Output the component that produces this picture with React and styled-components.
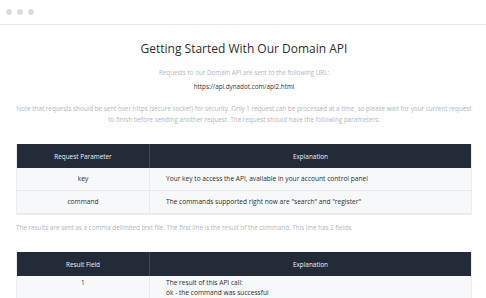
import styled, { createGlobalStyle } from "styled-components";

const GlobalStyle = createGlobalStyle`
  body {
    margin: 0;
    background: #ffffff;
    font-family: "Open Sans", "Liberation Sans", sans-serif;
  }
`;

const Window = styled.div`
  width: 486px;
  height: 298px;
  overflow: hidden;
  background: #fff;
`;

const TopBar = styled.div`
  height: 25px;
  display: flex;
  align-items: center;
  gap: 5px;
  padding-left: 6px;
  border-bottom: 1px solid #e6e6e6;
  box-sizing: border-box;
`;

const Dot = styled.span`
  width: 6px;
  height: 6px;
  border-radius: 50%;
  background: #dcdcdc;
`;

const Content = styled.div`
  padding: 0 14px 0 16px;
  text-align: center;
`;

const Title = styled.h1`
  margin: 16px 0 0;
  font-size: 12px;
  font-weight: 400;
  color: #2e2e2e;
  line-height: 16px;
`;

const Note = styled.p`
  margin: ${(p) => p.$mt || 0}px 0 0;
  font-size: 6.3px;
  line-height: 11px;
  text-align: ${(p) => (p.$left ? "left" : "center")};
  color: ${(p) => (p.$dark ? "#333" : "#b3b8bd")};
`;

const Table = styled.div`
  margin-top: ${(p) => p.$mt}px;
  display: grid;
  grid-template-columns: 132px 1fr;
  background: #f7f8fa;
  border: 1px solid #ebedef;
  border-top: none;
`;

const Head = styled.div`
  background: #232b38;
  color: #eef0f2;
  font-size: 6.4px;
  height: 24px;
  display: flex;
  align-items: center;
  justify-content: center;
  border-left: ${(p) => (p.$split ? "1px solid #3d4552" : "none")};
`;

const Cell = styled.div`
  height: 22px;
  display: flex;
  flex-direction: column;
  justify-content: center;
  align-items: ${(p) => (p.$center ? "center" : "flex-start")};
  padding-left: ${(p) => (p.$center ? 0 : 16)}px;
  font-size: 6.6px;
  line-height: 10px;
  color: #2f2f2f;
  border-bottom: 1px solid #e9ebee;
  border-left: ${(p) => (p.$split ? "1px solid #e9ebee" : "none")};
  text-align: left;
`;

const TallCell = styled(Cell)`
  height: 30px;
  justify-content: flex-start;
  padding-top: 2px;
  box-sizing: border-box;
`;

export default function App() {
  return (
    <Window>
      <GlobalStyle />
      <TopBar>
        <Dot />
        <Dot />
        <Dot />
      </TopBar>
      <Content>
        <Title>Getting Started With Our Domain API</Title>
        <Note $mt={10}>Requests to our Domain API are sent to the following URL:</Note>
        <Note $mt={3} $dark>https://api.dynadot.com/api2.html</Note>
        <Note $mt={11}>
          Note that requests should be sent over https (secure socket) for security. Only 1
          request can be processed at a time, so please wait for your current request
          <br />
          to finish before sending another request. The request should have the following
          parameters:
        </Note>
        <Table $mt={19}>
          <Head>Request Parameter</Head>
          <Head $split>Explanation</Head>
          <Cell $center>key</Cell>
          <Cell $split>Your key to access the API, available in your account control panel</Cell>
          <Cell $center>command</Cell>
          <Cell $split>The commands supported right now are "search" and "register"</Cell>
        </Table>
        <Note $mt={7} $left>
          The results are sent as a comma delimited text file. The first line is the result
          of the command. This line has 2 fields.
        </Note>
        <Table $mt={19}>
          <Head>Result Field</Head>
          <Head $split>Explanation</Head>
          <TallCell $center>1</TallCell>
          <TallCell $split>
            <span>The result of this API call:</span>
            <span>ok - the command was successful</span>
          </TallCell>
        </Table>
      </Content>
    </Window>
  );
}
